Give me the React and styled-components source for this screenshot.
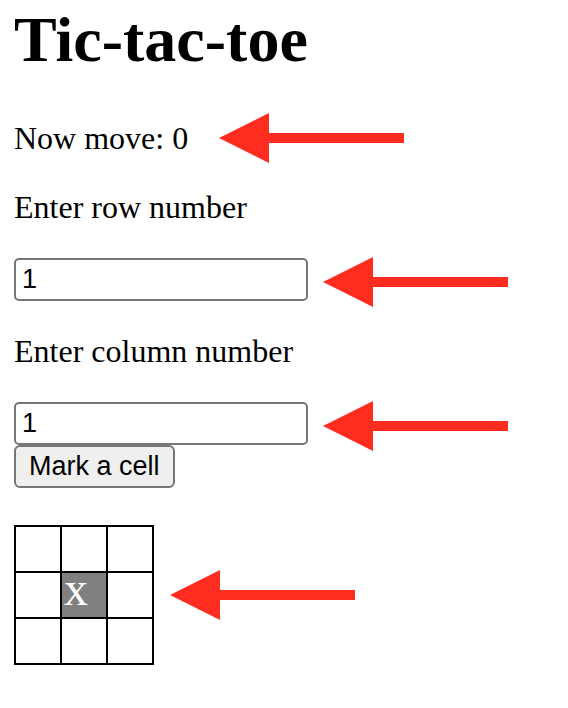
import React, { useState } from "react";
import styled, { createGlobalStyle } from "styled-components";

const GlobalStyle = createGlobalStyle`
  body {
    margin: 0;
    background: #fff;
    color: #000;
    font-family: "Liberation Serif", "Times New Roman", serif;
    font-size: 32px;
    line-height: 36px;
  }
`;

const Page = styled.main`
  padding: 4px 14px 32px;
`;

const Title = styled.h1`
  margin: 0 0 44px;
  font-size: 64px;
  line-height: 72px;
`;

const Row = styled.div`
  display: flex;
  align-items: ${({ $align }) => $align || "center"};
  gap: ${({ $gap }) => $gap}px;
`;

const Status = styled.p`
  margin: 0;
`;

const Form = styled.form`
  display: flex;
  flex-direction: column;
  gap: 32px;
  margin: 33px 0 37px;
`;

const Field = styled.div`
  display: flex;
  flex-direction: column;
  gap: 33px;
`;

const Controls = styled.div`
  display: flex;
  flex-direction: column;
  align-items: flex-start;
`;

const NumberInput = styled.input`
  box-sizing: border-box;
  width: 294px;
  height: 43px;
  padding: 2px 6px;
  border: 2px solid #767676;
  border-radius: 5px;
  background: #fff;
  color: #000;
  font: 27px "Liberation Sans", Arial, sans-serif;
`;

const MarkButton = styled.button`
  box-sizing: border-box;
  height: 43px;
  padding: 0 13px;
  border: 2px solid #767676;
  border-radius: 6px;
  background: #efefef;
  color: #000;
  font: 27px "Liberation Sans", Arial, sans-serif;
`;

const Board = styled.table`
  border-collapse: collapse;
`;

const Cell = styled.td`
  box-sizing: border-box;
  width: 46px;
  height: 46px;
  padding: 1px 2px;
  border: 2px solid #000;
  background: ${({ $marked }) => ($marked ? "#808080" : "#fff")};
  color: #fff;
  font-size: 48px;
  line-height: 30px;
  vertical-align: top;
`;

const ArrowSvg = styled.svg`
  flex: none;
  width: 185px;
  height: 50px;
  margin: ${({ $top }) => ($top ? "-1px 0 -10px" : "-10px 0")};
  fill: #ff2d20;
`;

function Arrow({ top }) {
  return (
    <ArrowSvg $top={top} viewBox="0 0 185 50" aria-hidden="true">
      <path d="M0 25 50 0V20H185V30H50V50Z" />
    </ArrowSvg>
  );
}

const cells = [
  ["", "", ""],
  ["", "x", ""],
  ["", "", ""],
];

export default function App() {
  const [row, setRow] = useState("1");
  const [column, setColumn] = useState("1");

  return (
    <>
      <GlobalStyle />
      <Page>
        <Title>Tic-tac-toe</Title>
        <Row $gap={31}>
          <Status>Now move: 0</Status>
          <Arrow />
        </Row>
        <Form onSubmit={(event) => event.preventDefault()}>
          <Field>
            <label htmlFor="row">Enter row number</label>
            <Row $align="flex-start" $gap={15}>
              <NumberInput id="row" value={row} onChange={(e) => setRow(e.target.value)} />
              <Arrow top />
            </Row>
          </Field>
          <Field>
            <label htmlFor="column">Enter column number</label>
            <Row $align="flex-start" $gap={15}>
              <Controls>
                <NumberInput id="column" value={column} onChange={(e) => setColumn(e.target.value)} />
                <MarkButton type="submit">Mark a cell</MarkButton>
              </Controls>
              <Arrow top />
            </Row>
          </Field>
        </Form>
        <Row $gap={16}>
          <Board>
            <tbody>
              {cells.map((line, y) => (
                <tr key={y}>
                  {line.map((mark, x) => (
                    <Cell key={x} $marked={mark !== ""}>{mark}</Cell>
                  ))}
                </tr>
              ))}
            </tbody>
          </Board>
          <Arrow />
        </Row>
      </Page>
    </>
  );
}
